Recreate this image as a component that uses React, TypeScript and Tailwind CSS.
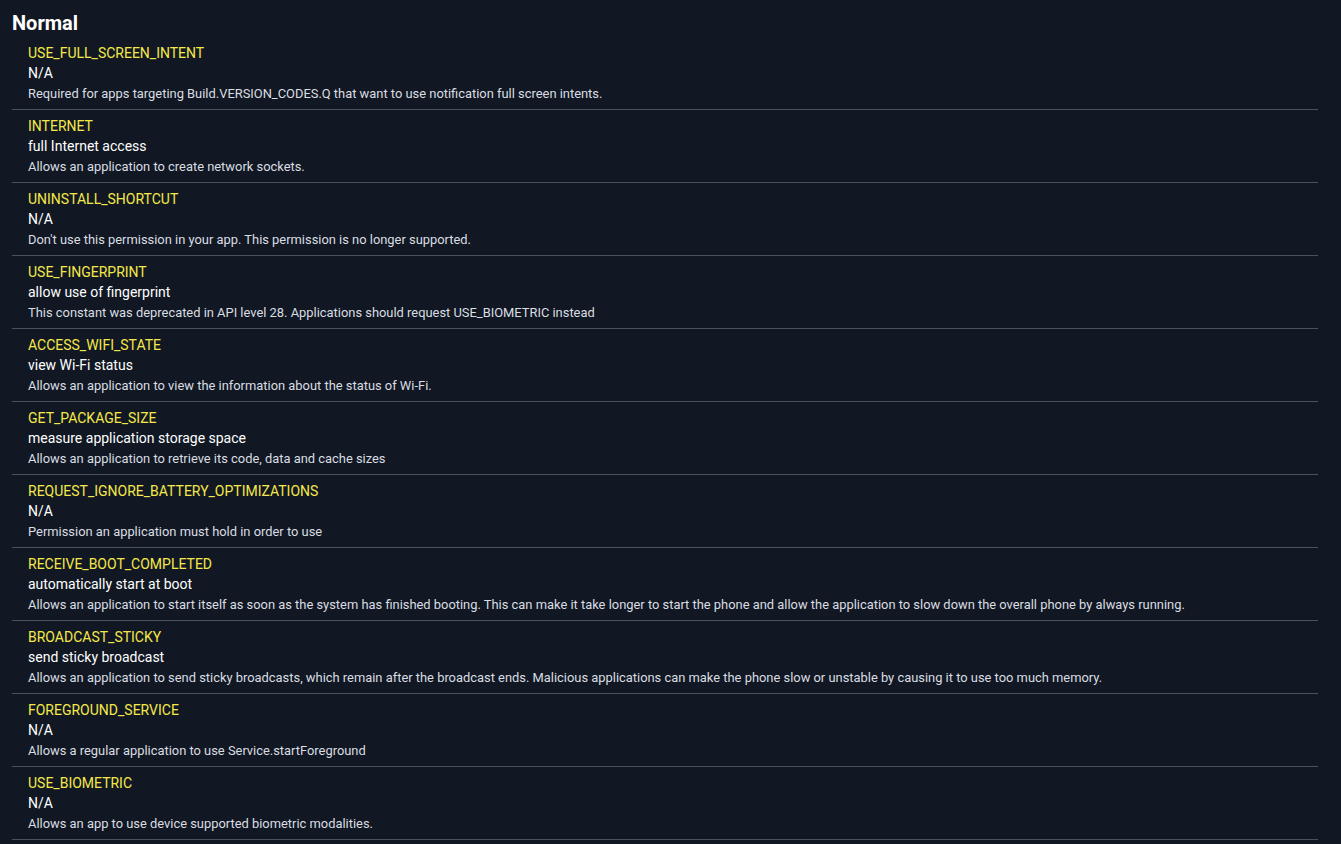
const permissions = [
    {
        name: 'USE_FULL_SCREEN_INTENT',
        label: 'N/A',
        description: 'Required for apps targeting Build.VERSION_CODES.Q that want to use notification full screen intents.',
    },
    {
        name: 'INTERNET',
        label: 'full Internet access',
        description: 'Allows an application to create network sockets.',
    },
    {
        name: 'UNINSTALL_SHORTCUT',
        label: 'N/A',
        description: "Don't use this permission in your app. This permission is no longer supported.",
    },
    {
        name: 'USE_FINGERPRINT',
        label: 'allow use of fingerprint',
        description: 'This constant was deprecated in API level 28. Applications should request USE_BIOMETRIC instead',
    },
    {
        name: 'ACCESS_WIFI_STATE',
        label: 'view Wi-Fi status',
        description: 'Allows an application to view the information about the status of Wi-Fi.',
    },
    {
        name: 'GET_PACKAGE_SIZE',
        label: 'measure application storage space',
        description: 'Allows an application to retrieve its code, data and cache sizes',
    },
    {
        name: 'REQUEST_IGNORE_BATTERY_OPTIMIZATIONS',
        label: 'N/A',
        description: 'Permission an application must hold in order to use',
    },
    {
        name: 'RECEIVE_BOOT_COMPLETED',
        label: 'automatically start at boot',
        description: 'Allows an application to start itself as soon as the system has finished booting. This can make it take longer to start the phone and allow the application to slow down the overall phone by always running.',
    },
    {
        name: 'BROADCAST_STICKY',
        label: 'send sticky broadcast',
        description: 'Allows an application to send sticky broadcasts, which remain after the broadcast ends. Malicious applications can make the phone slow or unstable by causing it to use too much memory.',
    },
    {
        name: 'FOREGROUND_SERVICE',
        label: 'N/A',
        description: 'Allows a regular application to use Service.startForeground',
    },
    {
        name: 'USE_BIOMETRIC',
        label: 'N/A',
        description: 'Allows an app to use device supported biometric modalities.',
    },
];

export default function App() {
    return (
        <div className="min-h-screen bg-[#111823] text-white font-['Roboto',sans-serif] overflow-hidden">
            <div className="pl-3 pr-[23px] pt-[9px]">
                {/* Section title */}
                <h2 className="text-xl leading-7 font-bold text-white">Normal</h2>

                {/* Permission list */}
                <ul>
                    {permissions.map((p) => (
                        <li key={p.name} className="border-b border-[#4a5260] pl-4 pt-[6px] pb-[5px]">
                            <div className="text-sm leading-5 text-[#f5e84a]">{p.name}</div>
                            <div className="text-sm leading-5 text-white">{p.label}</div>
                            <div className="mt-px text-[12.9px] leading-5 text-[#dadde2]">{p.description}</div>
                        </li>
                    ))}
                </ul>
            </div>
        </div>
    );
}
